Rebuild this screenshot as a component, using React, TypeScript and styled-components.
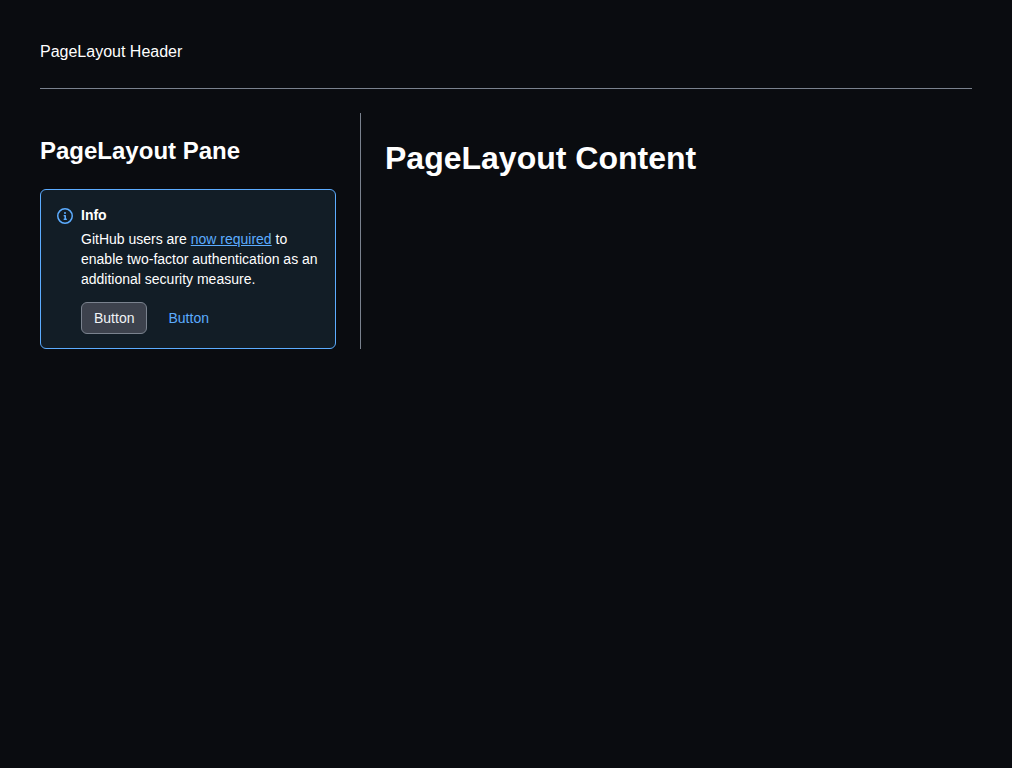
import React from "react";
import styled, { createGlobalStyle } from "styled-components";

const GlobalStyle = createGlobalStyle`
  *, *::before, *::after { box-sizing: border-box; }
  body {
    margin: 0;
    background: #0a0c10;
    color: #ffffff;
    font-family: "Liberation Sans", Arial, sans-serif;
    font-size: 16px;
    line-height: 24px;
  }
`;

const Page = styled.div`
  padding: 40px;
`;

const Header = styled.header`
  padding-bottom: 24px;
  margin-bottom: 24px;
  border-bottom: 1px solid #7a828e;
`;

const Columns = styled.div`
  display: flex;
`;

const Pane = styled.aside`
  width: 296px;
  flex: none;
`;

const Divider = styled.div`
  width: 1px;
  margin: 0 24px;
  background: #7a828e;
`;

const Content = styled.main`
  flex: 1;
`;

const PaneTitle = styled.h2`
  margin: 20px 0;
  font-size: 24px;
  line-height: 36px;
`;

const ContentTitle = styled.h1`
  margin: 21px 0;
  font-size: 32px;
  line-height: 48px;
`;

const Banner = styled.section`
  display: flex;
  gap: 8px;
  padding: 15px;
  padding-left: 16px;
  padding-bottom: 14px;
  border: 1px solid #5cacff;
  border-radius: 6px;
  background: #121d26;
  font-size: 14px;
  line-height: 20px;
`;

const InfoIcon = styled.svg`
  flex: none;
  width: 16px;
  height: 16px;
  margin-top: 3px;
  fill: #5cacff;
`;

const BannerTitle = styled.h3`
  margin: 0 0 4px;
  font-size: 14px;
  line-height: 20px;
`;

const Message = styled.p`
  margin: 0;
`;

const Link = styled.a`
  color: #5cacff;
  text-decoration: underline;
`;

const Actions = styled.div`
  display: flex;
  gap: 8px;
  margin-top: 13px;
`;

const Button = styled.button<{ $link?: boolean }>`
  height: 32px;
  padding: 0 12px;
  border: 1px solid ${(p) => (p.$link ? "transparent" : "#7a828e")};
  border-radius: 6px;
  background: ${(p) => (p.$link ? "transparent" : "#3d424d")};
  color: ${(p) => (p.$link ? "#5cacff" : "#f0f3f6")};
  font: 14px/20px "Liberation Sans", Arial, sans-serif;
`;

export default function App() {
  return (
    <Page>
      <GlobalStyle />
      <Header>PageLayout Header</Header>
      <Columns>
        <Pane>
          <PaneTitle>PageLayout Pane</PaneTitle>
          <Banner>
            <InfoIcon viewBox="0 0 16 16" aria-hidden="true">
              <path d="M0 8a8 8 0 1 1 16 0A8 8 0 0 1 0 8Zm8-6.5a6.5 6.5 0 1 0 0 13 6.5 6.5 0 0 0 0-13ZM6.5 7.75A.75.75 0 0 1 7.25 7h1a.75.75 0 0 1 .75.75v2.75h.25a.75.75 0 0 1 0 1.5h-2a.75.75 0 0 1 0-1.5h.25v-2h-.25a.75.75 0 0 1-.75-.75ZM8 6a1 1 0 1 1 0-2 1 1 0 0 1 0 2Z" />
            </InfoIcon>
            <div>
              <BannerTitle>Info</BannerTitle>
              <Message>
                GitHub users are <Link href="#">now required</Link> to enable
                two-factor authentication as an additional security measure.
              </Message>
              <Actions>
                <Button>Button</Button>
                <Button $link>Button</Button>
              </Actions>
            </div>
          </Banner>
        </Pane>
        <Divider />
        <Content>
          <ContentTitle>PageLayout Content</ContentTitle>
        </Content>
      </Columns>
    </Page>
  );
}
